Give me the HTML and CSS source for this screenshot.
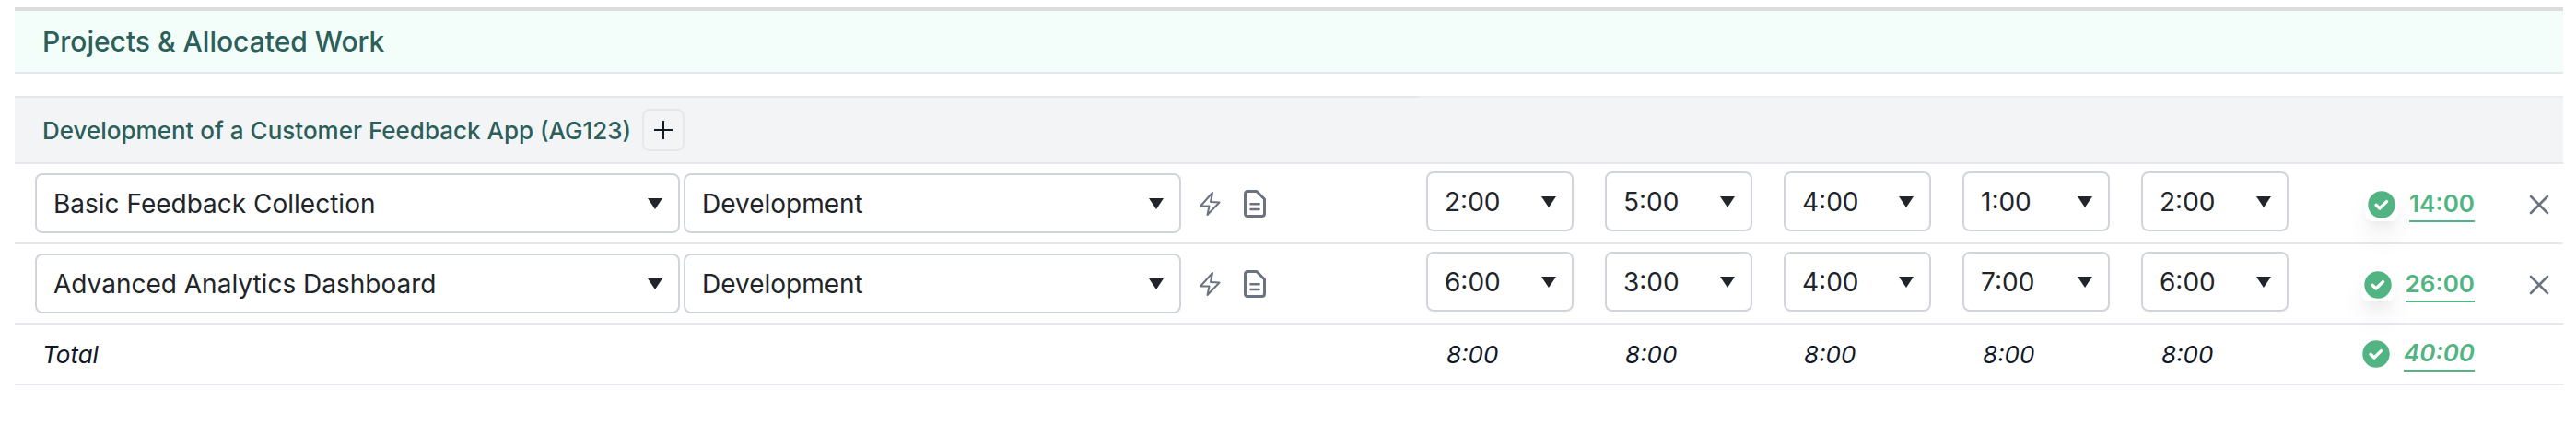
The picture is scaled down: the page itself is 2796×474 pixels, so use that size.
FILE: index.html
```html
<!DOCTYPE html>
<html lang="en">
  <head>
    <meta charset="UTF-8" />
    <meta name="viewport" content="width=device-width, initial-scale=1.0" />
    <title>Projects &amp; Allocated Work</title>
    <link rel="stylesheet" href="styles.css" />
  </head>
  <body>
    <!-- shared icons -->
    <svg class="sprite" aria-hidden="true">
      <symbol id="icon-bolt" viewBox="0 0 24 30">
        <path d="M15 3 L2 17.5 H11.5 L9.5 27 L22.5 13.5 L13 13 Z" fill="none" stroke="currentColor" stroke-width="2" stroke-linejoin="round" />
      </symbol>
      <symbol id="icon-doc" viewBox="0 0 24 30">
        <path d="M4.5 1.5 H14 L22.5 10 V25.5 Q22.5 28.5 19.5 28.5 H4.5 Q1.5 28.5 1.5 25.5 V4.5 Q1.5 1.5 4.5 1.5 Z" fill="none" stroke="currentColor" stroke-width="3" stroke-linejoin="round" />
        <path d="M7.5 15.2 H16.5 M7.5 21 H16.5" stroke="currentColor" stroke-width="2.6" stroke-linecap="round" />
      </symbol>
      <symbol id="icon-check" viewBox="0 0 30 30">
        <circle cx="15" cy="15" r="14.7" fill="currentColor" />
        <path d="M9 15.3 L12.9 19 L20.5 11.6" fill="none" stroke="#fff" stroke-width="3.4" stroke-linecap="round" stroke-linejoin="round" />
      </symbol>
      <symbol id="icon-close" viewBox="0 0 22 22">
        <path d="M2 2 L20 20 M20 2 L2 20" stroke="currentColor" stroke-width="2.6" stroke-linecap="round" />
      </symbol>
    </svg>

    <h1 class="section-title">Projects &amp; Allocated Work</h1>

    <table class="work-table">
      <colgroup>
        <col />
        <col class="col-hours" span="5" />
        <col class="col-total" />
        <col class="col-remove" />
      </colgroup>
      <tbody>
        <tr class="project-row">
          <th scope="rowgroup">
            <div class="project-title">
              <span>Development of a Customer Feedback App (AG123)</span>
              <button type="button" class="add-button" aria-label="Add work">
                <svg width="20" height="20" viewBox="0 0 20 20">
                  <path d="M10 0 V20 M0 10 H20" stroke="currentColor" stroke-width="2" />
                </svg>
              </button>
            </div>
          </th>
          <td colspan="7"></td>
        </tr>

        <tr class="work-row">
          <td>
            <div class="work-item">
              <div class="select-box task"><select aria-label="Task"><option>Basic Feedback Collection</option></select></div>
              <div class="select-box activity"><select aria-label="Activity"><option>Development</option></select></div>
              <div class="work-actions">
                <button type="button" class="icon-button" aria-label="Quick fill"><svg><use href="#icon-bolt" /></svg></button>
                <button type="button" class="icon-button" aria-label="Notes"><svg><use href="#icon-doc" /></svg></button>
              </div>
            </div>
          </td>
          <td class="hours"><div class="select-box"><select aria-label="Day 1 hours"><option>2:00</option></select></div></td>
          <td class="hours"><div class="select-box"><select aria-label="Day 2 hours"><option>5:00</option></select></div></td>
          <td class="hours"><div class="select-box"><select aria-label="Day 3 hours"><option>4:00</option></select></div></td>
          <td class="hours"><div class="select-box"><select aria-label="Day 4 hours"><option>1:00</option></select></div></td>
          <td class="hours"><div class="select-box"><select aria-label="Day 5 hours"><option>2:00</option></select></div></td>
          <td class="row-sum">
            <div class="sum">
              <span class="status raised"><svg><use href="#icon-check" /></svg></span>
              <a href="#">14:00</a>
            </div>
          </td>
          <td class="remove"><button type="button" class="remove-button" aria-label="Remove row"><svg><use href="#icon-close" /></svg></button></td>
        </tr>

        <tr class="work-row">
          <td>
            <div class="work-item">
              <div class="select-box task"><select aria-label="Task"><option>Advanced Analytics Dashboard</option></select></div>
              <div class="select-box activity"><select aria-label="Activity"><option>Development</option></select></div>
              <div class="work-actions">
                <button type="button" class="icon-button" aria-label="Quick fill"><svg><use href="#icon-bolt" /></svg></button>
                <button type="button" class="icon-button" aria-label="Notes"><svg><use href="#icon-doc" /></svg></button>
              </div>
            </div>
          </td>
          <td class="hours"><div class="select-box"><select aria-label="Day 1 hours"><option>6:00</option></select></div></td>
          <td class="hours"><div class="select-box"><select aria-label="Day 2 hours"><option>3:00</option></select></div></td>
          <td class="hours"><div class="select-box"><select aria-label="Day 3 hours"><option>4:00</option></select></div></td>
          <td class="hours"><div class="select-box"><select aria-label="Day 4 hours"><option>7:00</option></select></div></td>
          <td class="hours"><div class="select-box"><select aria-label="Day 5 hours"><option>6:00</option></select></div></td>
          <td class="row-sum">
            <div class="sum">
              <span class="status raised"><svg><use href="#icon-check" /></svg></span>
              <a href="#">26:00</a>
            </div>
          </td>
          <td class="remove"><button type="button" class="remove-button" aria-label="Remove row"><svg><use href="#icon-close" /></svg></button></td>
        </tr>
      </tbody>
      <tfoot>
        <tr class="total-row">
          <th scope="row">Total</th>
          <td>8:00</td>
          <td>8:00</td>
          <td>8:00</td>
          <td>8:00</td>
          <td>8:00</td>
          <td class="total-sum">
            <div class="sum">
              <span class="status"><svg><use href="#icon-check" /></svg></span>
              <a href="#">40:00</a>
            </div>
          </td>
          <td></td>
        </tr>
      </tfoot>
    </table>
  </body>
</html>
```
FILE: styles.css
```css
* {
  box-sizing: border-box;
}

body {
  margin: 8px 14px 0 16px;
  background-color: #fff;
  color: #111827;
  font-family: Inter, "Liberation Sans", sans-serif;
  font-size: 26px;
}

button,
select {
  font-family: inherit;
  color: inherit;
}

button {
  display: flex;
  align-items: center;
  justify-content: center;
  padding: 0;
  border: none;
  background: none;
  cursor: pointer;
}

.sprite {
  display: none;
}

.section-title {
  margin: 0 0 24px;
  padding: 0 30px;
  border-top: 4px solid #ddd;
  border-bottom: 2px solid #e5e7eb;
  background-color: #f3fefa;
  color: #2c5f5a;
  font-size: 30px;
  font-weight: 500;
  line-height: 66px;
}

/* table */
.work-table {
  width: 100%;
  table-layout: fixed;
  border-collapse: separate;
  border-spacing: 0;
}

.col-hours {
  width: 194px;
}

.col-total {
  width: 176px;
}

.col-remove {
  width: 96px;
}

th,
td {
  padding: 0;
  border-bottom: 2px solid #e5e7eb;
  text-align: left;
}

/* project heading */
.project-row th,
.project-row td {
  border-top: 2px solid #e5e7eb;
  background-color: #f3f4f6;
}

.project-row td {
  border-top-color: #ededed;
}

.project-title {
  display: flex;
  align-items: center;
  gap: 12px;
  padding: 12px 30px;
  color: #2c5f5a;
  font-weight: 500;
}

.add-button {
  width: 46px;
  height: 46px;
  border: 2px solid #e5e7eb;
  border-radius: 8px;
  color: #111827;
}

/* work rows */
.work-item {
  display: flex;
  align-items: center;
  padding: 10px 0 10px 22px;
}

.select-box {
  position: relative;
}

.select-box select {
  display: block;
  width: 100%;
  height: 65px;
  padding: 0 44px 0 18px;
  border: 2px solid #d1d5db;
  border-radius: 8px;
  background-color: #fff;
  color: #212529;
  font-size: 28px;
  appearance: none;
}

.select-box::after {
  content: "";
  position: absolute;
  top: 27px;
  right: 19px;
  border: 8px solid transparent;
  border-top: 12px solid #212529;
  border-bottom: none;
  pointer-events: none;
}

.task {
  flex: 70;
  margin-right: 4px;
}

.activity {
  flex: 54;
}

.work-actions {
  display: flex;
  gap: 25px;
  width: 258px;
  padding-left: 19px;
}

.icon-button,
.remove-button {
  color: #6b7280;
}

.icon-button svg {
  width: 24px;
  height: 30px;
}

.hours {
  padding: 8px 26px 0 8px;
  vertical-align: top;
}

.row-sum,
.remove {
  padding-top: 2px;
}

.sum {
  display: flex;
  align-items: center;
  justify-content: flex-end;
  gap: 12px;
}

.sum a {
  border-bottom: 2px solid #53b483;
  color: #53b483;
  font-weight: 600;
  line-height: 36px;
  text-decoration: none;
}

.status {
  display: flex;
  align-items: center;
  justify-content: center;
  width: 36px;
  height: 36px;
  border-radius: 8px;
  color: #53b483;
}

.status svg {
  width: 30px;
  height: 30px;
}

.raised {
  background-color: #fff;
  box-shadow: 0 20px 30px -6px rgba(0, 0, 0, 0.1), 0 8px 12px -4px rgba(0, 0, 0, 0.05);
}

.remove-button {
  margin: 0 15px 0 auto;
}

.remove-button svg {
  width: 22px;
  height: 22px;
}

/* totals */
.total-row th,
.total-row td {
  height: 66px;
  font-style: italic;
  font-weight: 400;
}

.total-row th {
  padding-left: 30px;
}

.total-row td {
  padding-left: 30px;
}

.total-row .total-sum {
  padding-left: 0;
}
```
